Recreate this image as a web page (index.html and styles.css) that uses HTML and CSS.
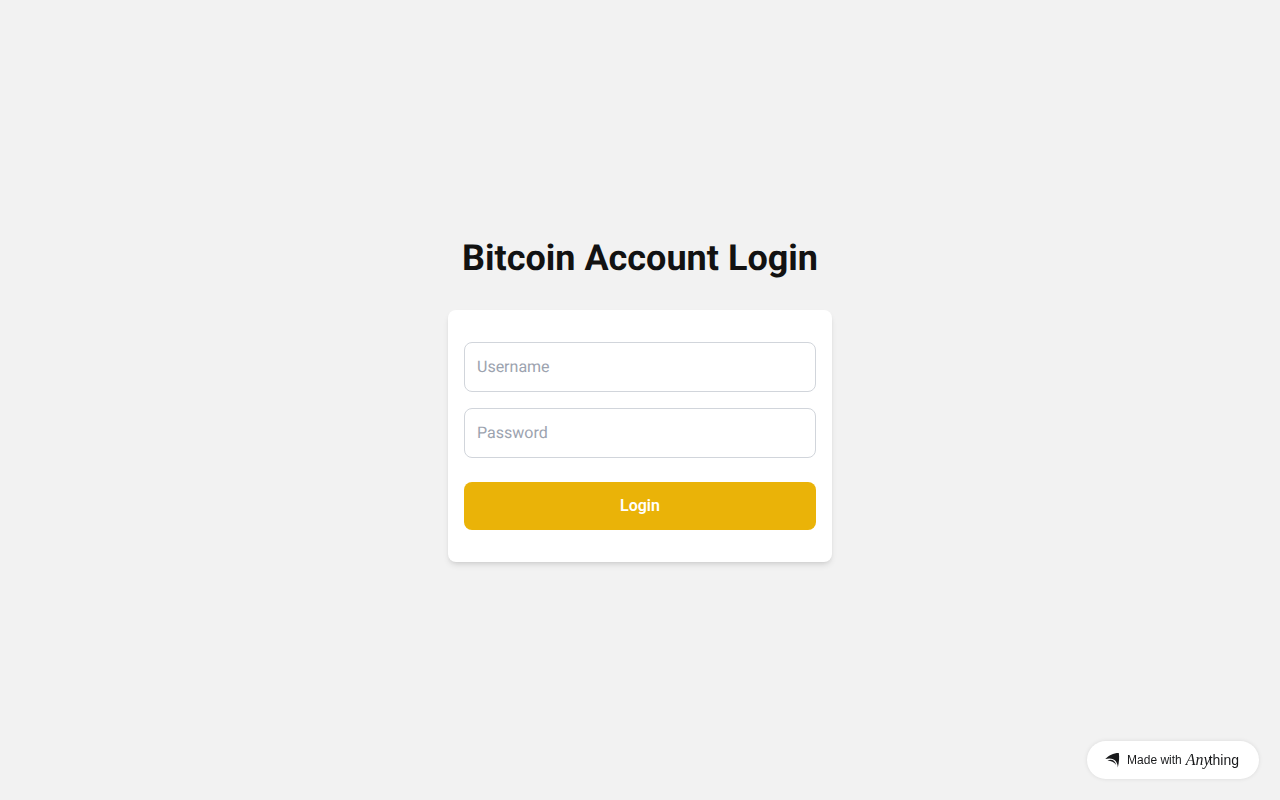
FILE: index.html
```html
<!DOCTYPE html>
<html lang="en">
<head>
<meta charset="utf-8">
<meta name="viewport" content="width=device-width, initial-scale=1">
<title>Bitcoin Account Login</title>
<link rel="stylesheet" href="styles.css">
</head>
<body>
<main class="page">
  <h1 class="title">Bitcoin Account Login</h1>
  <form class="card">
    <input class="field" type="text" placeholder="Username" aria-label="Username">
    <input class="field" type="password" placeholder="Password" aria-label="Password">
    <button class="submit" type="submit">Login</button>
  </form>
</main>
<a class="badge" href="#">
  <svg class="badge-icon" viewBox="0 0 15 16" aria-hidden="true"><path d="M.3 7C4 3.500 8 1 13.800 1C14.500 5 14.200 10 12.800 15.500C12.800 9 8.500 4.800 .3 7Z M2.500 8.500C6.500 6.800 10 8.500 11.300 13C8.800 9.800 6.500 8.800 2.500 8.500Z" fill="#18191b"/></svg>
  <span class="badge-text">Made with</span>
  <span class="brand"><span class="brand-script">Any</span><span class="brand-sans">thing</span></span>
</a>
</body>
</html>
```

FILE: styles.css
```css
* { box-sizing: border-box; }
body { margin: 0; background: #f2f2f2; color: #121212; font-family: Roboto, sans-serif; }
.page { min-height: 100vh; display: flex; flex-direction: column; align-items: center; justify-content: center; }
.title { margin: 0 0 32px; font-size: 36px; line-height: 40px; font-weight: 700; text-align: center; text-rendering: geometricPrecision; }
.card { width: 100%; max-width: 384px; padding: 32px 16px; display: flex; flex-direction: column; background: #fff; border-radius: 8px; box-shadow: 0 4px 6px -1px rgba(0,0,0,.1), 0 2px 4px -2px rgba(0,0,0,.1); }
.field { width: 100%; margin: 0 0 16px; padding: 12px; border: 1px solid #d1d5db; border-radius: 8px; background: #fff; font: 16px/24px Roboto, sans-serif; text-rendering: geometricPrecision; }
.field::placeholder { color: #9ca3af; }
.submit { margin-top: 8px; padding: 12px; border: 0; border-radius: 8px; background: #eab308; color: #fff; font: 600 16px/24px Roboto, sans-serif; cursor: pointer; }
.badge { position: fixed; right: 21px; bottom: 21px; height: 38px; padding: 0 20px 0 18px; display: flex; align-items: center; background: #fff; border-radius: 19px; color: #18191b; text-decoration: none; box-shadow: 0 0 4px rgba(0,0,0,.1); }
.badge-icon { width: 15px; height: 16px; margin-right: 7px; }
.badge-text { font: 12px/16px "Liberation Sans", sans-serif; margin-right: 4px; }
.brand { display: flex; align-items: baseline; line-height: 20px; }
.brand-script { font: italic 16px/20px "Liberation Serif", serif; margin-right: -2px; }
.brand-sans { font: 14px/20px "Liberation Sans", sans-serif; }
```
